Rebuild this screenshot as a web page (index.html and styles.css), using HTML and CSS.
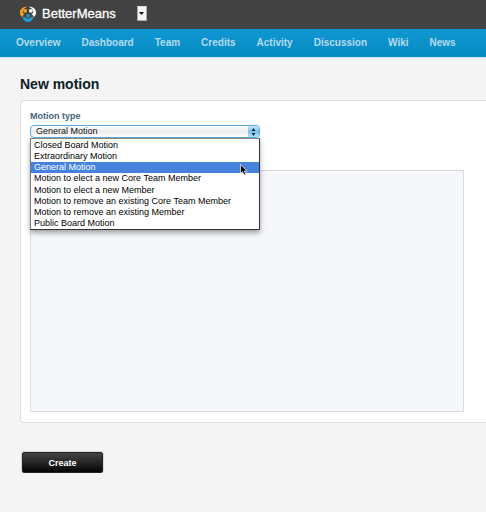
FILE: index.html
```html
<!DOCTYPE html>
<html lang="en">
<head>
<meta charset="utf-8">
<title>BetterMeans - New motion</title>
<link rel="stylesheet" href="styles.css">
</head>
<body>
<header class="topbar">
  <svg class="logo" viewBox="0 0 16 16" aria-hidden="true">
    <path d="M7.500.8C3 .3 0 3 0 6.500c0 2 .8 3.500 2.200 4.800C2.600 9.500 3 9 4.500 8.200 3 7.500 2.500 6.500 2.800 5c.8-2 2.500-3.500 4.700-4.200z" fill="#f6a21c"/>
    <circle cx="5.200" cy="4.800" r="1.900" fill="#f6a21c"/>
    <path d="M8.500.8C13 .3 16 3 16 6.500c0 2-.8 3.500-2.200 4.800-.4-1.800-.8-2.300-2.300-3.100 1.500-.7 2-1.700 1.700-3.200-.8-2-2.500-3.500-4.700-4.200z" fill="#fff"/>
    <circle cx="10.800" cy="4.800" r="1.900" fill="#fff"/>
    <path d="M2.500 11.500c1.500-.8 2.500-.4 3.300.4 1.400 1 3 1 4.400 0 .8-.8 1.800-1.200 3.300-.4C12.500 14 10.500 16 8 16s-4.500-2-5.500-4.500z" fill="#1ba0dc"/>
    <circle cx="8" cy="9.800" r="1.700" fill="#1ba0dc"/>
  </svg>
  <span class="brand">BetterMeans</span>
  <button class="switcher" type="button" aria-label="Switch workstream">
    <svg viewBox="0 0 5 3" aria-hidden="true"><path d="M0 0h5L2.500 3z" fill="#111"/></svg>
  </button>
</header>
<nav class="menu">
  <a href="#">Overview</a>
  <a href="#">Dashboard</a>
  <a href="#">Team</a>
  <a href="#">Credits</a>
  <a href="#">Activity</a>
  <a href="#">Discussion</a>
  <a href="#">Wiki</a>
  <a href="#">News</a>
</nav>
<main class="page">
  <h1>New motion</h1>
  <form>
    <div class="card">
      <label for="type">Motion type</label>
      <div class="picker">
        <select id="type">
          <option>General Motion</option>
        </select>
        <span class="stepper"><svg viewBox="0 0 5 8" aria-hidden="true"><path d="M.5 3l2-3 2 3zM.5 5h4l-2 3z" fill="#122b45"/></svg></span>
        <ul class="options" role="listbox" aria-label="Motion type">
          <li role="option">Closed Board Motion</li>
          <li role="option">Extraordinary Motion</li>
          <li role="option" class="active" aria-selected="true">General Motion</li>
          <li role="option">Motion to elect a new Core Team Member</li>
          <li role="option">Motion to elect a new Member</li>
          <li role="option">Motion to remove an existing Core Team Member</li>
          <li role="option">Motion to remove an existing Member</li>
          <li role="option">Public Board Motion</li>
        </ul>
        <svg class="pointer" viewBox="0 0 8 12" aria-hidden="true"><path d="M.5.5v9l2-2 1.500 3.500 1.700-.8L4.300 7h3z" fill="#000" stroke="#fff" stroke-width=".7"/></svg>
      </div>
      <textarea aria-label="Description"></textarea>
    </div>
    <button class="create" type="submit">Create</button>
  </form>
</main>
</body>
</html>
```
FILE: styles.css
```css
* { box-sizing: border-box; }

body {
  margin: 0;
  background: #f4f4f4;
  color: #000;
  font: 9px/11px "Liberation Sans", Arial, sans-serif;
}

button, select, textarea { font: inherit; }

.topbar {
  display: flex;
  align-items: center;
  height: 29px;
  padding: 0 20px 2px;
  background: #424242;
}

.logo { width: 16px; height: 16px; }

.brand {
  margin-left: 6px;
  color: #fff;
  font-size: 13px;
  line-height: 16px;
  -webkit-text-stroke: 0.3px #fff;
}

.switcher {
  display: flex;
  align-items: center;
  justify-content: center;
  width: 10px;
  height: 15px;
  margin-left: 21px;
  padding: 0;
  border: 1px solid #aaa;
  border-top-color: #ddd;
  background: #f4f4f4;
}

.switcher svg { width: 5px; height: 3px; }

.menu {
  display: flex;
  align-items: center;
  gap: 21px;
  height: 29px;
  padding: 0 16px 2px;
  background: linear-gradient(#1097d2, #068bc2);
  border-bottom: 1px solid #dcecf8;
}

.menu a {
  color: #b5dbef;
  font-size: 10px;
  font-weight: bold;
  text-decoration: none;
}

.page { padding: 17px 0 0 20px; }

h1 {
  margin: 0 0 7px;
  color: #0c1c28;
  font-size: 14px;
  line-height: 18px;
}

.card {
  padding: 10px 22px 10px 9px;
  background: #fff;
  border: 1px solid #dedede;
  border-right: 0;
  border-radius: 4px 0 0 4px;
}

.card label {
  display: block;
  color: #436476;
  font-weight: bold;
}

.picker {
  position: relative;
  width: 230px;
  height: 13px;
  margin: 3px 0 32px;
}

.picker select {
  display: block;
  width: 100%;
  height: 13px;
  padding: 0 5px;
  appearance: none;
  color: #111;
  border: 1px solid #5eaade;
  border-radius: 4px;
  outline: 0;
  background: linear-gradient(#fff, #ececec 50%, #fff);
  box-shadow: 0 0 1px #a5d2f0;
}

.stepper {
  position: absolute;
  top: 1px;
  right: 1px;
  display: flex;
  align-items: center;
  justify-content: center;
  width: 11px;
  height: 11px;
  border-radius: 0 3px 3px 0;
  background: linear-gradient(#c9e5f9, #7fbdeb 50%, #b6e2fb);
  pointer-events: none;
}

.stepper svg { width: 5px; height: 8px; }

.options {
  position: absolute;
  top: 13px;
  left: 0;
  display: grid;
  grid-auto-rows: 1fr;
  width: 100%;
  height: 92px;
  margin: 0;
  padding: 1px 0 0;
  list-style: none;
  background: #fff;
  border: 1px solid #333;
  border-top-color: #888;
  border-left-color: #777;
  box-shadow: 0 3px 5px rgba(0, 0, 0, 0.35);
}

.options li {
  display: flex;
  align-items: center;
  padding: 0 3px;
  white-space: nowrap;
}

.options .active { color: #fff; background: #4682dc; }

.pointer {
  position: absolute;
  top: 39px;
  left: 210px;
  width: 8px;
  height: 12px;
}

textarea {
  display: block;
  width: 100%;
  height: 242px;
  resize: none;
  background: #f5f7fa;
  border: 1px solid #d9dcde;
}

.create {
  display: block;
  width: 81px;
  height: 21px;
  margin: 29px 0 0 2px;
  padding: 2px 0 0;
  color: #fff;
  font-weight: bold;
  border: 1px solid #222;
  border-radius: 2px;
  background: linear-gradient(#444, #050505);
  box-shadow: 0 0 1px 1px #d5d8d4;
}
```
